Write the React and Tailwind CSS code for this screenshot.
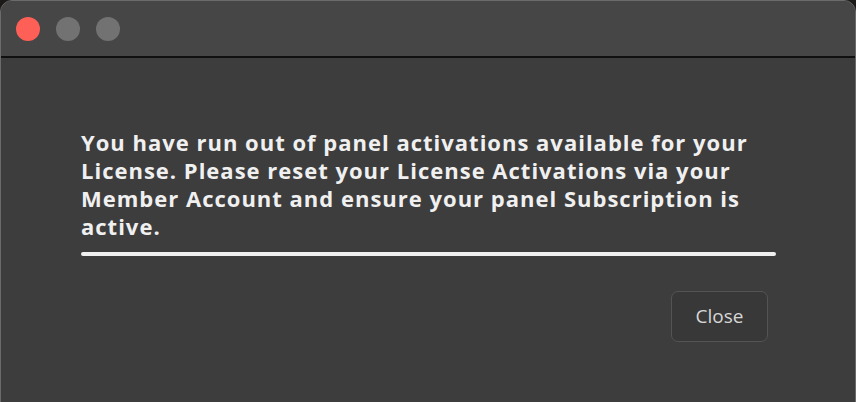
import React from "react";

const App = () => {
  return (
    <div className="w-[856px] h-[402px] bg-[#1c1a19] overflow-hidden">
      <div className="w-[856px] h-[420px] rounded-t-[12px] border border-[#6b6b6b] bg-[#3d3d3d] flex flex-col overflow-hidden">
        {/* title bar */}
        <div className="h-[57px] shrink-0 bg-[#464646] border-b-[2px] border-[#101010] flex items-center gap-4 pl-[15px]">
          <div className="w-6 h-6 rounded-full bg-[#fe5f57]" />
          <div className="w-6 h-6 rounded-full bg-[#727272]" />
          <div className="w-6 h-6 rounded-full bg-[#727272]" />
        </div>

        <div className="flex flex-col pl-[80px] pr-[79px] pt-[70px]">
          <p
            className="text-[22px] leading-[28px] font-bold tracking-[1px] text-[#f0f0f0] whitespace-nowrap"
            style={{ fontFamily: "'Open Sans', sans-serif" }}
          >
            You have run out of panel activations available for your
            <br />
            License. Please reset your License Activations via your
            <br />
            Member Account and ensure your panel Subscription is
            <br />
            active.
          </p>
          <div className="mt-[12px] h-[4px] rounded-full bg-[#f0f0f0]" />
          <div className="flex justify-end mt-[35px] pr-[8px]">
            <button
              className="w-[97px] h-[51px] rounded-[7px] border-[1.5px] border-[#545454] bg-[#383838] text-[19px] text-[#d6d6d6]"
              style={{ fontFamily: "'Open Sans', sans-serif" }}
            >
              Close
            </button>
          </div>
        </div>
      </div>
    </div>
  );
};

export default App;
